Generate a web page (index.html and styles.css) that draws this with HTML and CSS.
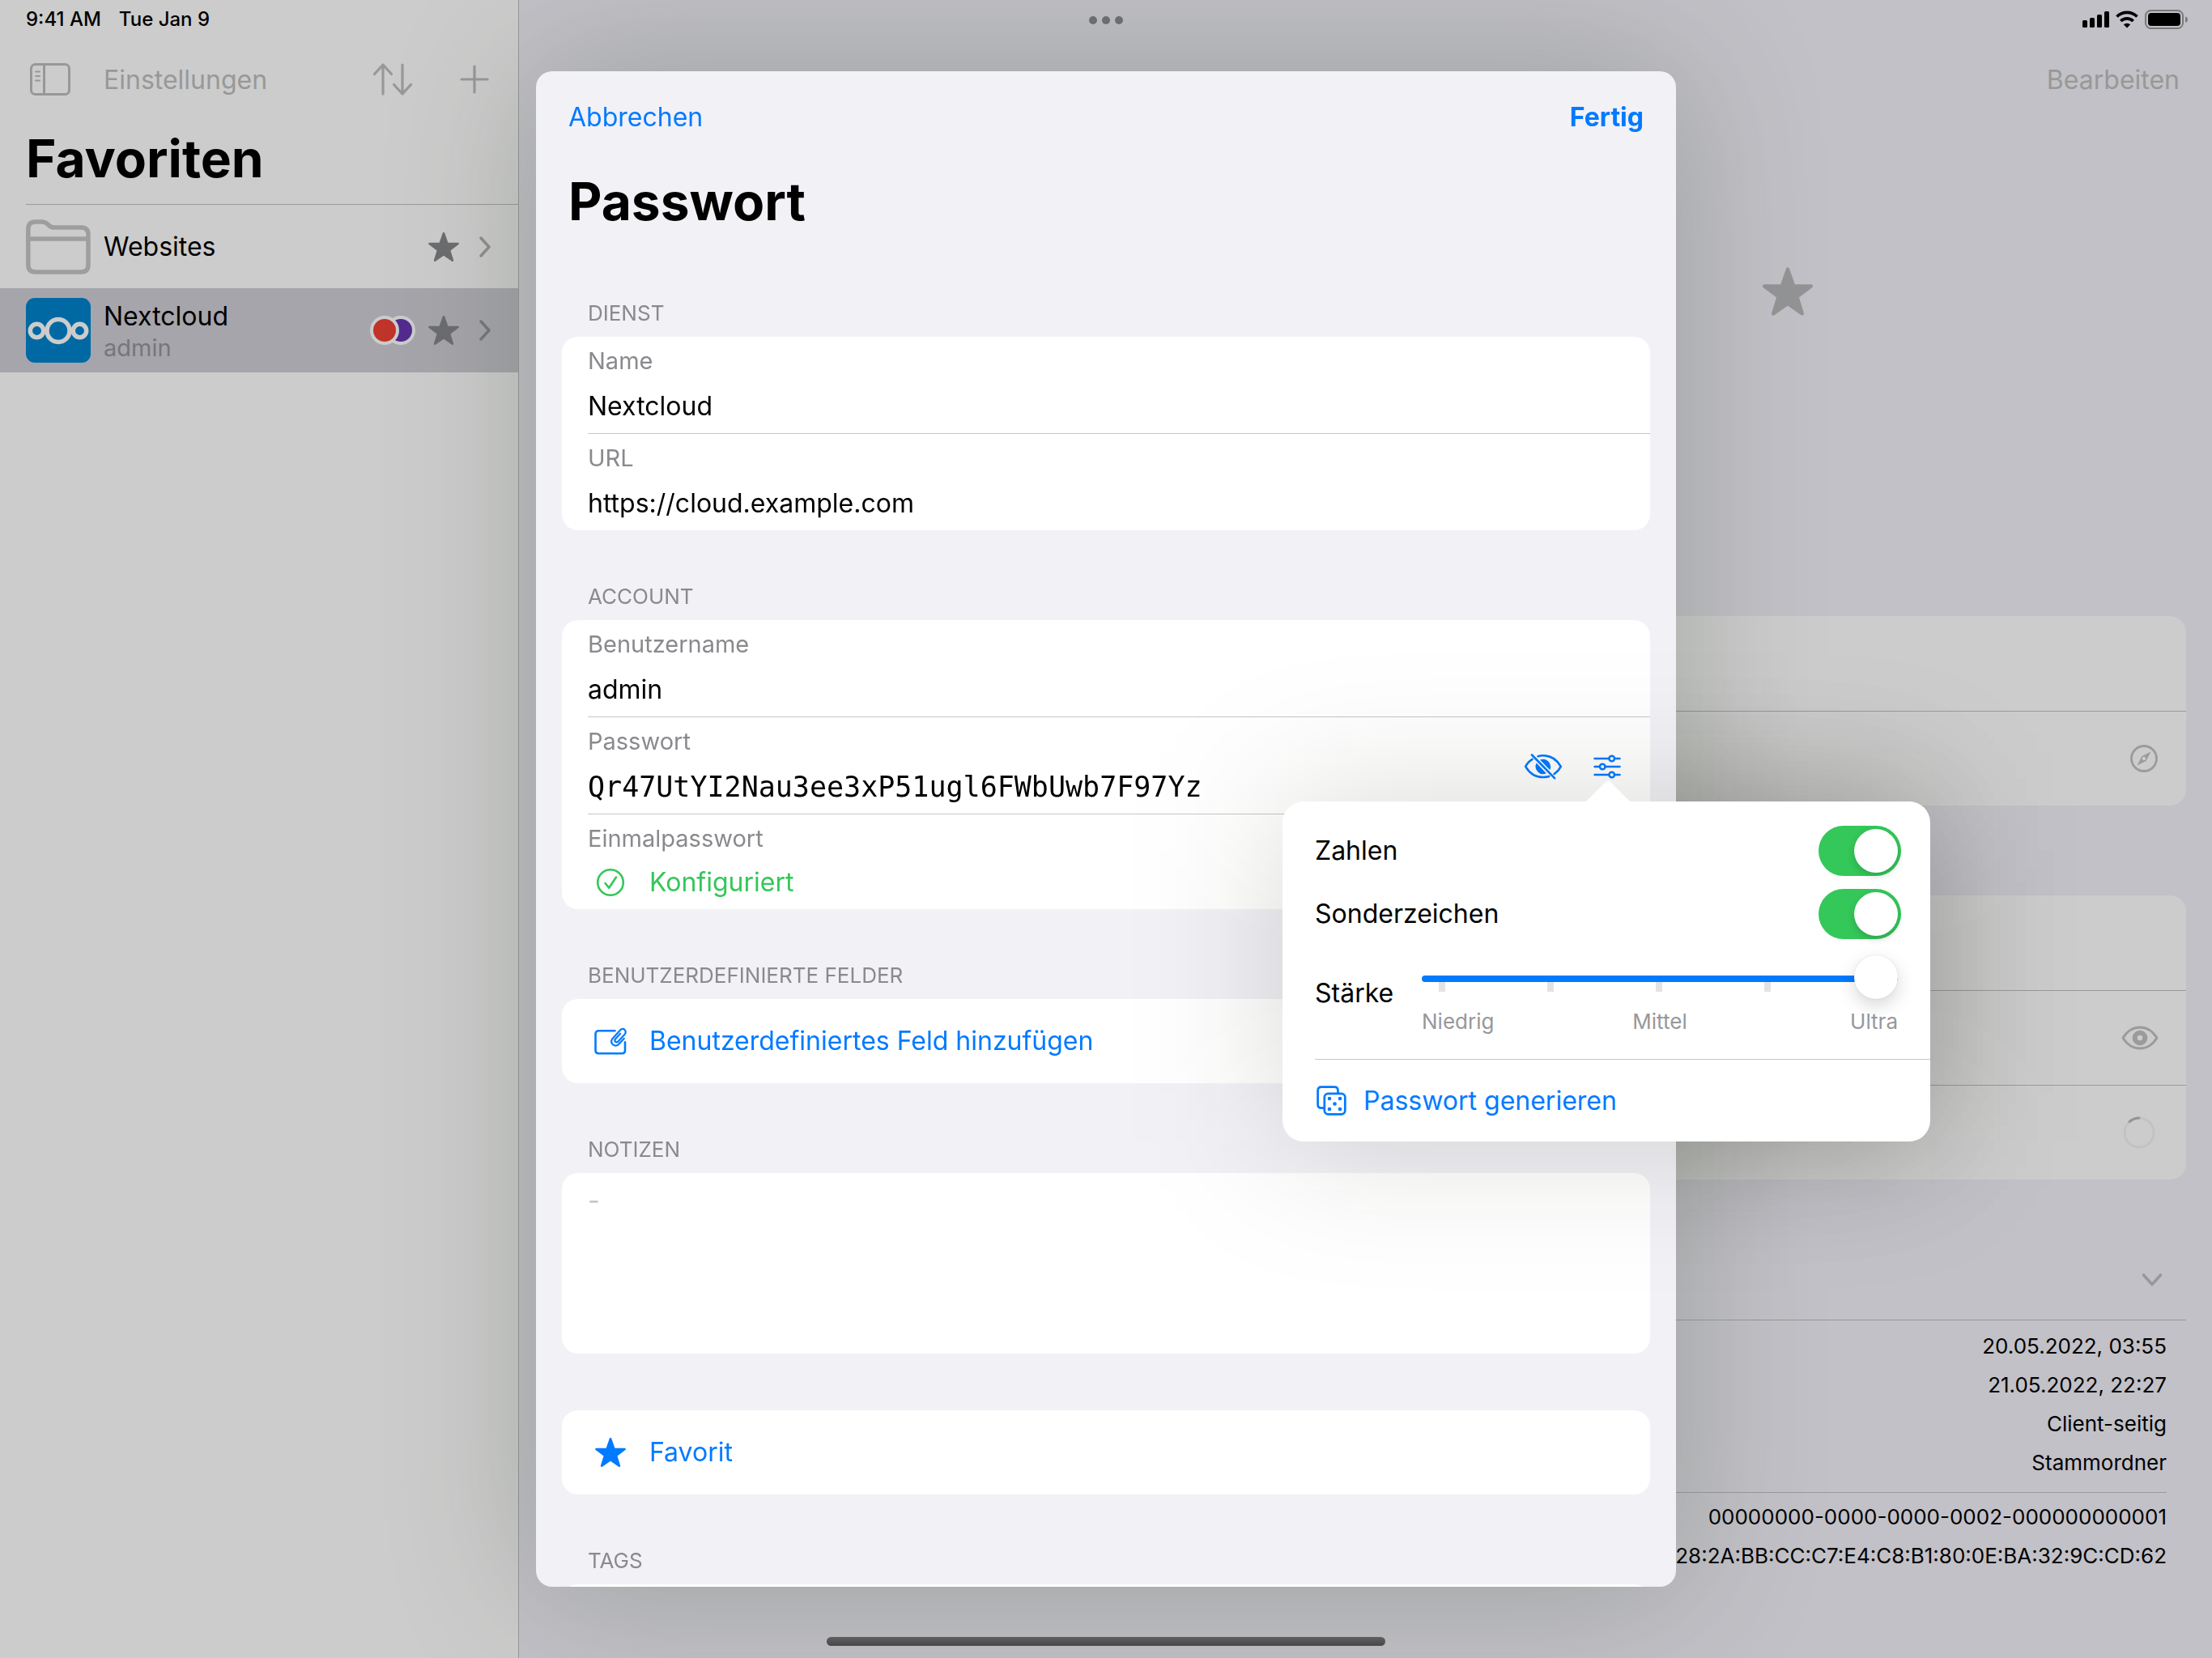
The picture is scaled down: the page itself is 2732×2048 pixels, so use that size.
FILE: index.html
```html
<!DOCTYPE html>
<html lang="de">
<head>
<meta charset="utf-8">
<meta name="viewport" content="width=device-width, initial-scale=1">
<title>Passwort</title>
<link rel="stylesheet" href="styles.css">
</head>
<body>
<svg class="sprite" aria-hidden="true">
  <symbol id="star" viewBox="-10.2 -10.7 20.4 19.5">
    <path d="M0-10 2.35-3.24 9.51-3.09 3.8 1.24 5.88 8.09 0 4-5.88 8.09-3.8 1.24-9.51-3.09-2.35-3.24Z" fill="currentColor" stroke="currentColor" stroke-width="1.4" stroke-linejoin="round"/>
  </symbol>
  <symbol id="chevron" viewBox="0 0 16 26">
    <path d="M3 2 13 13 3 24" fill="none" stroke="currentColor" stroke-width="3.4" stroke-linecap="round" stroke-linejoin="round"/>
  </symbol>
</svg>

<div class="app">
  <aside class="sidebar">
    <div class="status">
      <span>9:41 AM</span>
      <span>Tue Jan 9</span>
    </div>
    <div class="toolbar">
      <button class="icon-btn" aria-label="Seitenleiste">
        <svg width="52" height="42" viewBox="0 0 52 42" fill="none" stroke="currentColor" stroke-width="3" stroke-linecap="round"><rect x="2.500" y="2.500" width="47" height="37" rx="5"/><path d="M18.500 3v36"/><path d="M8 11.500h5M8 17h5M8 22.500h5" stroke-width="2"/></svg>
      </button>
      <a class="toolbar-link" href="#einstellungen">Einstellungen</a>
      <button class="icon-btn sort" aria-label="Sortieren">
        <svg width="50" height="42" viewBox="0 0 50 42" fill="none" stroke="currentColor" stroke-width="3.200" stroke-linecap="round" stroke-linejoin="round"><path d="M13 39V3M2.500 14.500 13 3l10.500 11.500M37 3v36M26.500 27.500 37 39l10.500-11.500"/></svg>
      </button>
      <button class="icon-btn" aria-label="Neu">
        <svg width="36" height="36" viewBox="0 0 36 36" stroke="currentColor" stroke-width="3.200" stroke-linecap="round"><path d="M18 2v32M2 18h32"/></svg>
      </button>
    </div>
    <h1 class="title sidebar-title">Favoriten</h1>
    <nav class="list">
      <a class="item" href="#websites">
        <svg class="item-icon folder" width="80" height="68" viewBox="0 0 80 68" fill="none" stroke="currentColor" stroke-width="5.500"><path d="M2.800 12Q2.800 3 11.500 3H19.500Q24 3 27 6L28.500 7.500Q31 10 35 10H68.500Q77 10 77 19V56Q77 65 68.500 65H11.500Q2.800 65 2.800 56ZM3 24H77"/></svg>
        <span class="item-text"><span class="item-name">Websites</span></span>
        <svg class="item-star" width="38" height="36"><use href="#star"/></svg>
        <svg class="item-chevron" width="16" height="26"><use href="#chevron"/></svg>
      </a>
      <a class="item selected" href="#nextcloud" aria-current="page">
        <svg class="item-icon" width="80" height="80" viewBox="0 0 80 80"><rect width="80" height="80" rx="11" fill="#0069a3"/><g fill="none" stroke="#ccc" stroke-width="5.500"><circle cx="40" cy="40.500" r="14"/><circle cx="13.500" cy="40.500" r="8.200"/><circle cx="66.500" cy="40.500" r="8.200"/></g></svg>
        <span class="item-text"><span class="item-name">Nextcloud</span><span class="item-sub">admin</span></span>
        <svg class="tags" width="56" height="36" viewBox="0 0 56 36" stroke="#ccc" stroke-width="4" role="img" aria-label="Tags"><circle cx="38" cy="18" r="16" fill="#512c8e"/><circle cx="18" cy="18" r="16" fill="#c0342a"/></svg>
        <svg class="item-star" width="38" height="36"><use href="#star"/></svg>
        <svg class="item-chevron" width="16" height="26"><use href="#chevron"/></svg>
      </a>
    </nav>
  </aside>

  <main class="detail">
    <div class="status status-right">
      <svg width="132" height="26" viewBox="0 0 132 26" role="img" aria-label="Mobilfunk, WLAN, Akku">
        <rect x="2" y="14" width="6" height="9" rx="1.500"/><rect x="11" y="11" width="6" height="12" rx="1.500"/><rect x="20" y="7" width="6" height="16" rx="1.500"/><rect x="29" y="3" width="6" height="20" rx="1.500"/>
        <g fill="none" stroke="#000" stroke-width="3.700"><path d="M44.500 9.500a18 18 0 0 1 25 0"/><path d="M49.300 15a11.300 11.300 0 0 1 15.400 0"/></g>
        <path d="M57 23.500 52.800 19.300a6.200 6.200 0 0 1 8.400 0Z"/>
        <rect x="80" y="2" width="46" height="22" rx="6.500" fill="none" stroke="#79787b" stroke-width="2"/>
        <rect x="83" y="5" width="40" height="16" rx="4"/>
        <path d="M129 9.500q3 1 3 3.700t-3 3.700Z" fill="#79787b"/>
      </svg>
    </div>
    <div class="toolbar detail-toolbar">
      <a class="toolbar-link" href="#bearbeiten">Bearbeiten</a>
    </div>
    <div class="hero">
      <svg width="62" height="60" role="img" aria-label="Favorit"><use href="#star"/></svg>
    </div>
    <div class="panel">
      <div class="panel-row"></div>
      <div class="panel-row">
        <svg width="36" height="36" viewBox="0 0 36 36" role="img" aria-label="Öffnen"><circle cx="18" cy="18" r="15.500" fill="none" stroke="currentColor" stroke-width="2.800"/><path fill="currentColor" fill-rule="evenodd" d="M26.500 9.500 20.500 21 9.500 26.500 15.500 15ZM18 15.800a2.200 2.200 0 1 0 0 4.400 2.200 2.200 0 0 0 0-4.400Z"/></svg>
      </div>
    </div>
    <div class="panel">
      <div class="panel-row"></div>
      <div class="panel-row">
        <svg width="46" height="32" viewBox="0 0 46 32" role="img" aria-label="Anzeigen"><path d="M2 16C7 8 14 3 23 3s16 5 21 13c-5 8-12 13-21 13S7 24 2 16Z" fill="none" stroke="currentColor" stroke-width="2.800" stroke-linejoin="round"/><path fill="currentColor" fill-rule="evenodd" d="M23 6.700a9.300 9.300 0 1 0 0 18.600 9.300 9.300 0 0 0 0-18.600Zm0 6a3.300 3.300 0 1 1 0 6.600 3.300 3.300 0 0 1 0-6.600Z"/></svg>
      </div>
      <div class="panel-row">
        <svg class="spinner" width="40" height="40" viewBox="0 0 40 40" fill="none" stroke-width="2.800" role="img" aria-label="Restzeit"><circle cx="20" cy="20" r="18" stroke="#c2c1c6"/><path d="M8 6.600A18 18 0 0 1 20 2" stroke="#949494" stroke-linecap="round"/></svg>
      </div>
    </div>
    <section class="meta">
      <div class="meta-head">
        <svg width="28" height="18" viewBox="0 0 28 18" fill="none" stroke="currentColor" stroke-width="3.600" stroke-linecap="round" stroke-linejoin="round"><path d="M3.500 3 14 14.500 24.500 3"/></svg>
      </div>
      <ul class="meta-list">
        <li>20.05.2022, 03:55</li>
        <li>21.05.2022, 22:27</li>
        <li>Client-seitig</li>
        <li>Stammordner</li>
      </ul>
      <ul class="meta-list meta-ids">
        <li>00000000-0000-0000-0002-000000000001</li>
        <li>28:2A:BB:CC:C7:E4:C8:B1:80:0E:BA:32:9C:CD:62</li>
      </ul>
    </section>
  </main>
</div>

<div class="grabber" aria-hidden="true"><i></i><i></i><i></i></div>
<div class="home-bar" aria-hidden="true"></div>

<div class="overlay">
  <div class="dialog" role="dialog" aria-labelledby="dialog-title">
    <form class="sheet">
      <div class="sheet-nav">
        <button type="button" class="link">Abbrechen</button>
        <button type="button" class="link strong">Fertig</button>
      </div>
      <h2 class="title sheet-title" id="dialog-title">Passwort</h2>

      <h3 class="group-title">Dienst</h3>
      <div class="card">
        <div class="field">
          <div class="field-main">
            <label for="name">Name</label>
            <input id="name" type="text" value="Nextcloud">
          </div>
        </div>
        <div class="field">
          <div class="field-main">
            <label for="url">URL</label>
            <input id="url" type="text" value="https://cloud.example.com">
          </div>
        </div>
      </div>

      <h3 class="group-title">Account</h3>
      <div class="card">
        <div class="field">
          <div class="field-main">
            <label for="user">Benutzername</label>
            <input id="user" type="text" value="admin">
          </div>
        </div>
        <div class="field">
          <div class="field-main">
            <label for="password">Passwort</label>
            <input id="password" class="mono" type="text" value="Qr47UtYI2Nau3ee3xP51ugl6FWbUwb7F97Yz">
          </div>
          <div class="field-actions">
            <button type="button" class="icon-btn" aria-label="Passwort verbergen">
              <svg width="48" height="34" viewBox="0 0 48 34" fill="none" stroke="currentColor" stroke-width="2.600" stroke-linecap="round"><path d="M10.500 7.800C7 10 4 13 2.200 16.800 7 25 14.500 30 24 30c2.600 0 5-.4 7.200-1.100M17.500 4.200C19.500 3.600 21.700 3.300 24 3.300c9.500 0 17 5.200 21.800 13.500-1.800 3.500-4.700 6.700-8.200 9.200"/><path d="M15.700 12.500A9.300 9.300 0 0 0 27.800 25.300ZM20 8.600A9.300 9.300 0 0 1 32.200 21Z" fill="currentColor" stroke="none"/><path d="M10 2.500 38 31.200"/></svg>
            </button>
            <button type="button" class="icon-btn" aria-label="Generator" aria-expanded="true">
              <svg width="34" height="30" viewBox="0 0 34 30" fill="none" stroke="currentColor" stroke-width="2.500" stroke-linecap="round"><path d="M1.500 5H19M26.500 5H32.500M1.500 15H7.500M15 15H32.500M1.500 25H19M26.500 25H32.500"/><circle cx="22.700" cy="5" r="3.300"/><circle cx="11.200" cy="15" r="3.300"/><circle cx="22.700" cy="25" r="3.300"/></svg>
            </button>
          </div>
        </div>
        <div class="field">
          <div class="field-main otp">
            <span class="field-label">Einmalpasswort</span>
            <button type="button" class="row-btn green">
              <svg width="36" height="36" viewBox="0 0 36 36" fill="none" stroke="currentColor" stroke-width="2.600" stroke-linecap="round" stroke-linejoin="round"><circle cx="18" cy="18" r="15.800"/><path d="M11.500 19 16.200 24.800 25 11.500"/></svg>
              <span>Konfiguriert</span>
            </button>
          </div>
        </div>
      </div>

      <h3 class="group-title">Benutzerdefinierte Felder</h3>
      <div class="card">
        <button type="button" class="row-btn tall">
          <svg width="40" height="34" viewBox="0 0 40 34" fill="none" stroke="currentColor" stroke-width="2.600" stroke-linecap="round" stroke-linejoin="round"><path d="M25.500 4.300H5.500Q1.500 4.300 1.500 8.300V28.300Q1.500 32.200 5.500 32.200H34Q38 32.200 38 28.300V18.300"/><path stroke-width="2.200" d="M36.800 13.800 29.800 21.300Q26.500 23.800 23 21.300 19.300 18 22.500 14L31.700 3.700Q34.700.6 37.500 2.900 40 5.500 37.500 8.700L29.400 17.600Q27.600 19 26 17.700 24.600 16.200 26 14.500L32.200 7.700"/></svg>
          <span>Benutzerdefiniertes Feld hinzufügen</span>
        </button>
      </div>

      <h3 class="group-title"><label for="notes">Notizen</label></h3>
      <div class="card">
        <textarea id="notes" class="notes" placeholder="-"></textarea>
      </div>

      <div class="card spaced">
        <button type="button" class="row-btn tall">
          <svg width="38" height="36"><use href="#star"/></svg>
          <span>Favorit</span>
        </button>
      </div>

      <h3 class="group-title">Tags</h3>
      <div class="card"><div class="field"></div></div>
    </form>

    <div class="popover" role="group" aria-label="Passwortgenerator">
      <svg class="popover-arrow" width="60" height="28" viewBox="0 0 60 28" aria-hidden="true"><path d="M0 28Q3 27.500 5 25L26.500 3.500Q30-.5 33.500 3.500L55 25Q57 27.500 60 28Z" fill="#fff"/></svg>
      <div class="switch-row">
        <label for="digits">Zahlen</label>
        <input id="digits" class="switch" type="checkbox" role="switch" checked>
      </div>
      <div class="switch-row">
        <label for="symbols">Sonderzeichen</label>
        <input id="symbols" class="switch" type="checkbox" role="switch" checked>
      </div>
      <div class="strength">
        <label for="strength">Stärke</label>
        <div class="slider">
          <div class="slider-track">
            <div class="ticks" aria-hidden="true"><i></i><i></i><i></i><i></i><i></i></div>
            <input id="strength" type="range" min="0" max="4" value="4">
          </div>
          <div class="slider-labels"><span>Niedrig</span><span>Mittel</span><span>Ultra</span></div>
        </div>
      </div>
      <button type="button" class="generate">
        <svg width="38" height="38" viewBox="0 0 38 38" fill="none" stroke="currentColor" stroke-width="2.700"><path d="M9.500 27.700H6.200Q1.600 27.700 1.600 23.200V6.200Q1.600 1.700 6.200 1.700H22Q26.500 1.700 26.500 6.200V9.300"/><rect x="9.800" y="9.800" width="25.500" height="25.500" rx="4.500"/><g fill="currentColor" stroke="none"><circle cx="16" cy="16" r="2.300"/><circle cx="29" cy="16" r="2.300"/><circle cx="22.500" cy="22.500" r="2.300"/><circle cx="16" cy="29" r="2.300"/><circle cx="29" cy="29" r="2.300"/></g></svg>
        <span>Passwort generieren</span>
      </button>
    </div>
  </div>
</div>
</body>
</html>
```
FILE: styles.css
```css
:root {
  --blue: #007aff;
  --green: #34c759;
  --grey: #8a8a8e;
  --line: #c6c6c8;
  --dim-line: #9a9a9b;
  --dim-icon: #9b9b9b;
  --body: 32px;
  --sub: 29px;
  --caption: 26px;
}

* { box-sizing: border-box; }

body {
  margin: 0;
  font-family: Inter, "Liberation Sans", sans-serif;
  font-size: var(--body);
  line-height: 44px;
  color: #000;
  overflow: hidden;
}

h1, h2, h3, ul { margin: 0; padding: 0; }
svg { display: block; flex: none; }
a { color: inherit; text-decoration: none; }

button, input, textarea {
  font: inherit;
  color: inherit;
  margin: 0;
  padding: 0;
  border: 0;
  background: none;
}

.sprite { position: absolute; width: 0; height: 0; }

/* App behind the dialog */
.app {
  display: flex;
  height: 100vh;
}

.sidebar {
  flex: 0 0 641px;
  background: #ccc;
  border-right: 1px solid #97989a;
}

.detail {
  flex: 1;
  min-width: 0;
  background: #c2c1c7;
}

.status {
  display: flex;
  align-items: center;
  gap: 22px;
  height: 48px;
  padding: 0 30px 0 32px;
  font-size: 24px;
  font-weight: 500;
  line-height: 32px;
}

.status-right { justify-content: flex-end; }

.toolbar {
  display: flex;
  align-items: center;
  height: 100px;
  padding: 0 36px;
  color: #989898;
}

.toolbar-link { padding-top: 2px; }
.detail-toolbar { justify-content: flex-end; padding-right: 40px; }
.sidebar .toolbar-link { margin-left: 40px; }
.sort { margin-left: auto; margin-right: 58px; }

.icon-btn { display: flex; color: inherit; }

.title {
  font-size: 64px;
  line-height: 80px;
  font-weight: 700;
}

.sidebar-title { margin: 8px 32px 16px; }

.list { position: relative; }
.list::before {
  content: "";
  display: block;
  margin-left: 32px;
  border-top: 1px solid var(--dim-line);
}

.item {
  display: flex;
  align-items: center;
  height: 103px;
  padding: 0 33px 0 32px;
}

.item.selected { height: 104px; background: #a6a5ab; }
.folder { color: #9e9e9e; }
.item-text { display: flex; flex-direction: column; flex: 1; gap: 1px; margin-left: 16px; }
.selected .item-text { padding-top: 2px; }
.item-name { line-height: 40px; }
.item-sub { font-size: var(--sub); line-height: 36px; color: #77767b; }
.tags { margin-right: 16px; }
.item-star { color: #6c6d70; }
.item-chevron { margin-left: 24px; color: #8e8e8f; }
.selected .item-chevron { color: #77777b; }

.hero {
  display: flex;
  justify-content: flex-end;
  height: 613px;
  padding: 182px 493px 0 0;
  color: #949496;
}

.panel {
  margin: 0 32px 111px;
  border-radius: 20px;
  background: #ccc;
  color: var(--dim-icon);
}

.panel-row {
  display: flex;
  align-items: center;
  justify-content: flex-end;
  height: 117px;
  padding-right: 34px;
}

.panel-row + .panel-row { border-top: 1px solid var(--dim-line); }
.spinner { margin-right: 4px; }

.meta { margin: -111px 32px 0; }

.meta-head {
  display: flex;
  align-items: center;
  justify-content: flex-end;
  height: 174px;
  padding: 74px 28px 0 0;
  border-bottom: 1px solid var(--dim-line);
  color: #98989c;
}

.meta-list {
  margin-right: 24px;
  padding: 8px 0 12px;
  list-style: none;
  font-size: var(--caption);
  line-height: 48px;
  text-align: right;
}

.meta-ids { padding-top: 6px; border-top: 1px solid var(--dim-line); }

.grabber {
  position: fixed;
  top: 20px;
  left: 0;
  right: 0;
  display: flex;
  justify-content: center;
  gap: 6px;
}

.grabber i { width: 10px; height: 10px; border-radius: 50%; background: #707172; }

.home-bar {
  position: fixed;
  z-index: 2;
  bottom: 15px;
  left: 50%;
  width: 690px;
  height: 11px;
  margin-left: -345px;
  border-radius: 6px;
  background: linear-gradient(#5f6162, #474846);
}

/* Dialog */
.overlay {
  position: fixed;
  inset: 0;
  z-index: 1;
  display: flex;
  justify-content: center;
  padding: 88px 0;
}

.dialog {
  position: relative;
  width: 1408px;
}

/* Soft shade of the popover: one layer under the sheet, one over it */
.dialog::before,
.dialog::after {
  content: "";
  position: absolute;
  top: 902px;
  right: -314px;
  width: 800px;
  height: 420px;
  background: rgba(20, 20, 0, 0.16);
  filter: blur(90px);
  pointer-events: none;
}

.dialog::before { z-index: -1; }

.sheet {
  height: 100%;
  overflow: hidden;
  padding: 0 32px;
  border-radius: 20px;
  background: #f2f1f6;
  box-shadow: 0 0 180px rgba(48, 68, 42, 0.27);
}

.sheet-nav {
  display: flex;
  justify-content: space-between;
  padding: 35px 8px 0;
}

.link { color: var(--blue); }
.strong { font-weight: 700; }
.sheet-title { margin: 42px 8px 82px; }

.group-title {
  margin: 66px 32px 13px;
  font-size: var(--caption);
  font-weight: 400;
  line-height: 32px;
  color: var(--grey);
  text-transform: uppercase;
}

.sheet-title + .group-title { margin-top: 0; }

.card {
  overflow: hidden;
  border-radius: 20px;
  background: #fff;
}

.spaced { margin-top: 70px; }

.field {
  display: flex;
  align-items: center;
  min-height: 60px;
  margin-left: 32px;
  padding-right: 36px;
}

.field + .field { border-top: 1px solid var(--line); }

.field-main {
  flex: 1;
  display: flex;
  flex-direction: column;
  gap: 16px;
  padding: 12px 0 11px;
}

.field-main label, .field-label {
  font-size: var(--sub);
  line-height: 36px;
  color: var(--grey);
}

.field-main input { width: 100%; height: 44px; outline: 0; }
.field-main .mono { font-family: "DejaVu Sans Mono", "Liberation Mono", monospace; font-size: 35px; }
.otp { gap: 14px; }

.field-actions {
  display: flex;
  align-items: center;
  gap: 38px;
  padding-top: 2px;
  color: var(--blue);
}

.row-btn {
  display: flex;
  align-items: center;
  text-align: left;
  color: var(--blue);
}

.row-btn svg { width: 56px; }
.row-btn span { margin-left: 20px; }
.row-btn.green { color: var(--green); }
.row-btn.tall { width: 100%; height: 104px; padding: 0 32px; }

.notes {
  display: block;
  width: 100%;
  height: 223px;
  padding: 12px 32px;
  resize: none;
  outline: 0;
}

.notes::placeholder { color: #c4c4c6; }

/* Generator popover */
.popover {
  position: absolute;
  z-index: 1;
  top: 902px;
  right: -314px;
  width: 800px;
  padding: 30px 0 0 40px;
  border-radius: 26px;
  background: #fff;
}

.popover-arrow { position: absolute; top: -27px; left: 372px; }

.switch-row {
  display: flex;
  align-items: center;
  justify-content: space-between;
  height: 62px;
  margin: 0 36px 16px 0;
}

.switch {
  appearance: none;
  width: 102px;
  height: 62px;
  padding: 4px;
  border-radius: 31px;
  background: #e9e9ea;
}

.switch::before {
  content: "";
  display: block;
  width: 54px;
  height: 54px;
  border-radius: 50%;
  background: #fff;
  box-shadow: 0 4px 10px rgba(0, 0, 0, 0.16);
}

.switch:checked { background: var(--green); }
.switch:checked::before { margin-left: 40px; }

.strength {
  display: grid;
  grid-template-columns: 104px 1fr;
  column-gap: 28px;
  align-items: center;
  margin: 20px 40px 30px 0;
}

.strength label { padding-bottom: 4px; }

.slider-track { display: grid; height: 54px; }
.slider-track > * { grid-area: 1 / 1; }

.ticks {
  display: flex;
  justify-content: space-between;
  padding: 32px 23px 0 21px;
}

.ticks i { width: 8px; height: 13px; background: #e3e3e5; }

.slider input {
  appearance: none;
  position: relative;
  width: 100%;
  height: 54px;
  padding-top: 4px;
}

.slider input::-webkit-slider-runnable-track {
  height: 8px;
  border-radius: 4px;
  background: var(--blue);
}

.slider input::-webkit-slider-thumb {
  appearance: none;
  width: 54px;
  height: 54px;
  margin-top: -25px;
  border-radius: 50%;
  background: #fff;
  box-shadow: 0 8px 22px rgba(0, 0, 0, 0.16), 0 0 2px rgba(0, 0, 0, 0.12);
}

.slider-labels {
  display: grid;
  grid-template-columns: 1fr 1fr 1fr;
  margin-top: 12px;
  font-size: var(--caption);
  line-height: 32px;
  color: #97979b;
}

.slider-labels span:nth-child(2) { text-align: center; }
.slider-labels span:nth-child(3) { text-align: right; }

.generate {
  display: flex;
  align-items: center;
  gap: 20px;
  width: 100%;
  height: 102px;
  padding: 0 2px;
  border-top: 1px solid var(--line);
  color: var(--blue);
}
```
